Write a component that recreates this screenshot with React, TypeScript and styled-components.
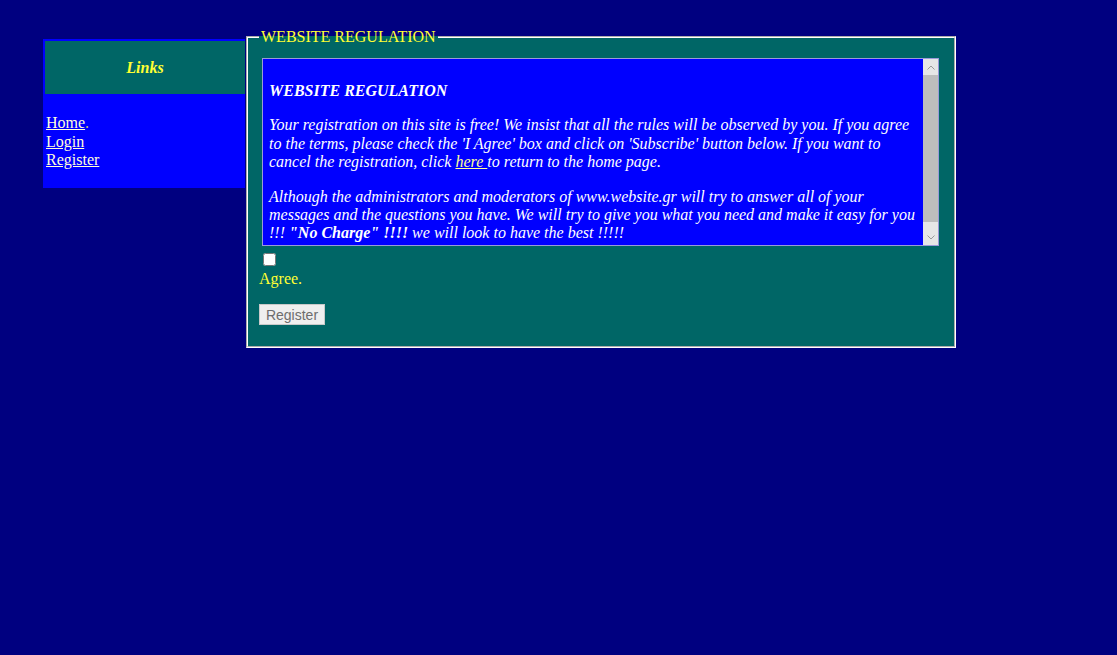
import React from "react";
import styled, { createGlobalStyle } from "styled-components";

const GlobalStyle = createGlobalStyle`
  html, body {
    margin: 0;
    padding: 0;
    background: #000080;
    font-family: "Liberation Serif", "Times New Roman", serif;
    font-size: 16px;
  }
`;

const Page = styled.div`
  display: flex;
  align-items: flex-start;
  padding-left: 43px;
  min-height: 655px;
  box-sizing: border-box;
`;

const LinksPanel = styled.div`
  width: 202px;
  margin-top: 39px;
  background: #0000ff;
  padding: 2px 0 0 2px;
  box-sizing: border-box;
  height: 149px;
`;

const LinksHeader = styled.div`
  height: 53px;
  background: #006666;
  display: flex;
  align-items: center;
  justify-content: center;
  color: #ffff33;
  font-weight: bold;
  font-style: italic;
  font-size: 16px;
`;

const LinksList = styled.div`
  padding: 20px 0 0 1px;
  display: flex;
  flex-direction: column;
  line-height: 18.5px;
  color: #c8c860;
`;

const NavLink = styled.a`
  color: #ffffd8;
  text-decoration: underline;
`;

const Fieldset = styled.fieldset`
  margin: 28px 0 0 1px;
  width: 710px;
  box-sizing: border-box;
  background: #006666;
  border: 2px groove #ffffff;
  padding: 12px 12px 21px 11px;
  min-width: 0;
`;

const Legend = styled.legend`
  color: #ffff33;
  padding: 0 2px;
  font-size: 16px;
  line-height: 18px;
`;

const ScrollFrame = styled.div`
  display: flex;
  margin: 0 3px;
  height: 188px;
  box-sizing: border-box;
  background: #0000ff;
  border: 1px solid #9a9ad8;
`;

const TextArea = styled.div`
  flex: 1;
  overflow: hidden;
  padding: 7px 6px 6px;
  color: #ffffff;
  font-style: italic;
  line-height: 18.4px;

  p {
    margin: 16px 0;
  }
`;

const Scrollbar = styled.div`
  width: 15px;
  display: flex;
  flex-direction: column;
  background: #e6e6e6;
`;

const ScrollButton = styled.div`
  height: 16px;
  display: flex;
  align-items: center;
  justify-content: center;
  background: #e6e6e6;
`;

const Thumb = styled.div`
  height: 147px;
  background: #bdbdbd;
`;

const Track = styled.div`
  flex: 1;
`;

const Heading = styled.p`
  font-weight: bold;
`;

const InlineLink = styled.a`
  color: #ffff99;
  text-decoration: underline;
`;

const CheckBox = styled.input`
  display: block;
  width: 13px;
  height: 13px;
  margin: 7px 3px 4px 4px;
`;

const AgreeText = styled.div`
  color: #ffff33;
  line-height: 18px;
`;

const RegisterButton = styled.button`
  display: block;
  margin-top: 16px;
  width: 66px;
  height: 21px;
  padding: 0;
  background: #efefef;
  border: 1px solid #c9c9c9;
  color: #6d6d6d;
  font-family: "Liberation Sans", Arial, sans-serif;
  font-size: 14px;
`;

export default function App() {
  return (
    <>
      <GlobalStyle />
      <Page>
        <LinksPanel>
          <LinksHeader>Links</LinksHeader>
          <LinksList>
            <span>
              <NavLink href="#">Home</NavLink>.
            </span>
            <span>
              <NavLink href="#">Login</NavLink>
            </span>
            <span>
              <NavLink href="#">Register</NavLink>
            </span>
          </LinksList>
        </LinksPanel>
        <Fieldset>
          <Legend>WEBSITE REGULATION</Legend>
          <ScrollFrame>
            <TextArea>
              <Heading>WEBSITE REGULATION</Heading>
              <p>
                Your registration on this site is free! We insist that all the rules will be observed by you. If you
                agree to the terms, please check the 'I Agree' box and click on 'Subscribe' button below. If you want
                to cancel the registration, click <InlineLink href="#">here </InlineLink>to return to the home page.
              </p>
              <p>
                Although the administrators and moderators of www.website.gr will try to answer all of your messages
                and the questions you have. We will try to give you what you need and make it easy for you !!!{" "}
                <b>"No Charge" !!!!</b> we will look to have the best !!!!!
              </p>
            </TextArea>
            <Scrollbar>
              <ScrollButton>
                <svg width="8" height="5" viewBox="0 0 8 5">
                  <path d="M0.5 4.5 L4 1 L7.5 4.5" fill="none" stroke="#9a9a9a" strokeWidth="1" />
                </svg>
              </ScrollButton>
              <Thumb />
              <Track />
              <ScrollButton>
                <svg width="8" height="5" viewBox="0 0 8 5">
                  <path d="M0.5 0.5 L4 4 L7.5 0.5" fill="none" stroke="#9a9a9a" strokeWidth="1" />
                </svg>
              </ScrollButton>
            </Scrollbar>
          </ScrollFrame>
          <CheckBox type="checkbox" />
          <AgreeText>Agree.</AgreeText>
          <RegisterButton disabled>Register</RegisterButton>
        </Fieldset>
      </Page>
    </>
  );
}
